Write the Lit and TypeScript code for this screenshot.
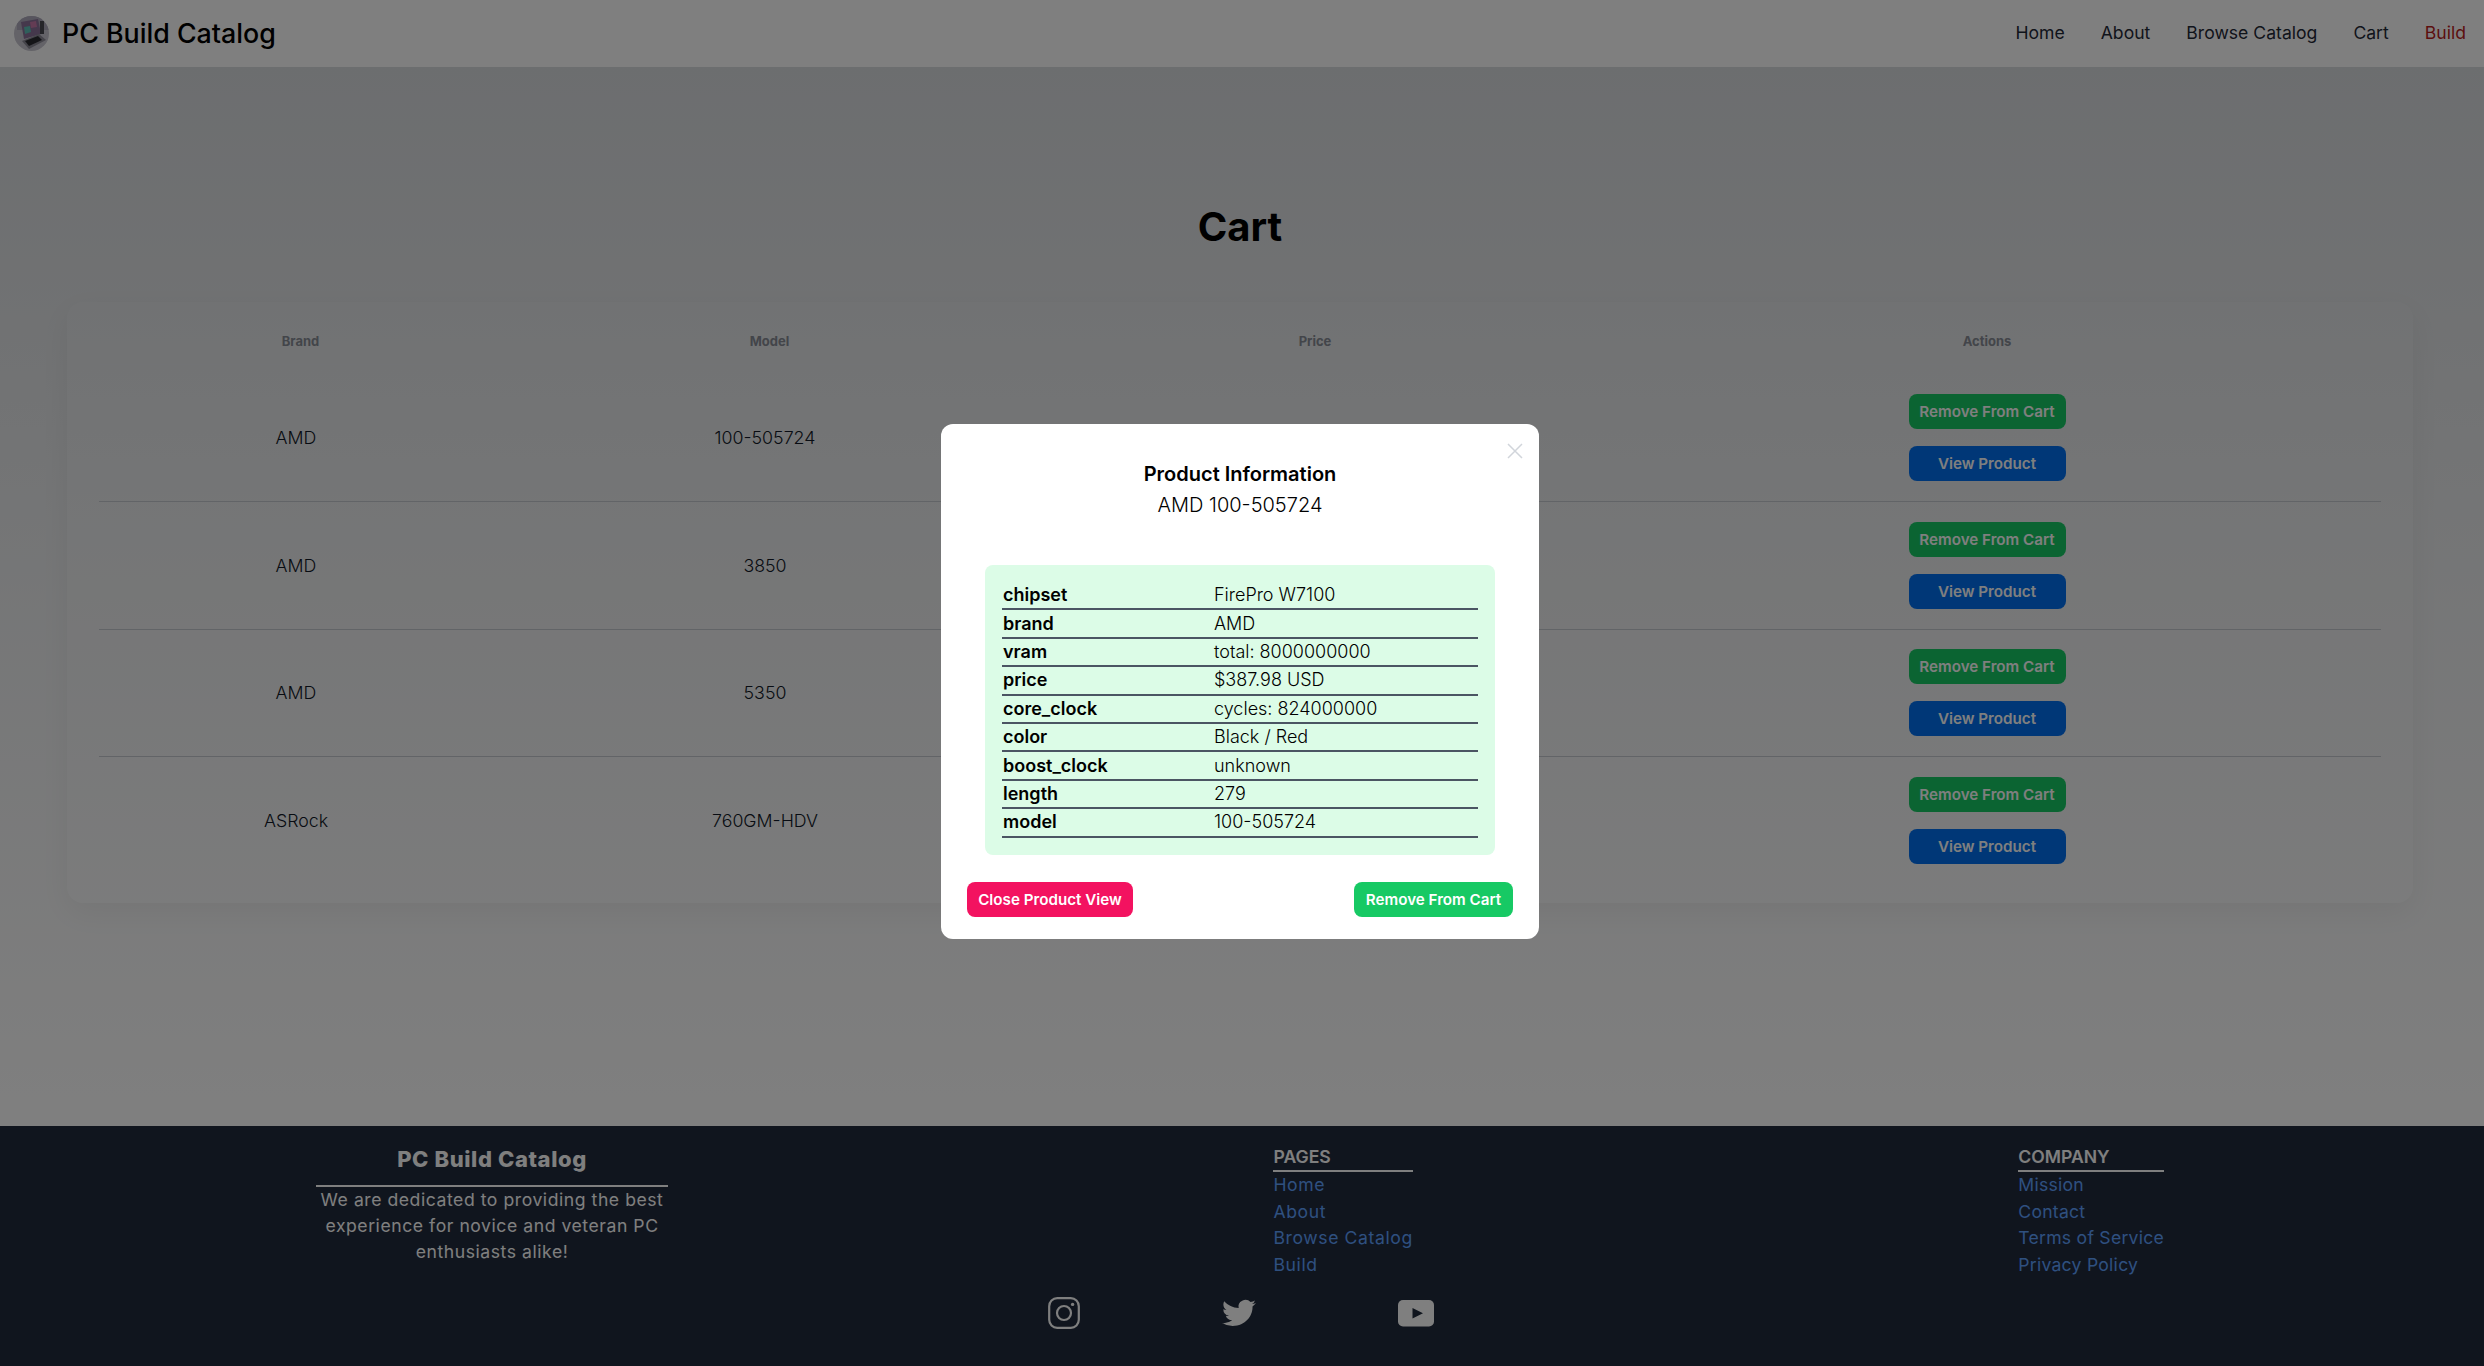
import { css, html, LitElement } from 'lit';
import { customElement } from 'lit/decorators.js';

const navLinks = ['Home', 'About', 'Browse Catalog', 'Cart', 'Build'];
const cartRows = [
  { brand: 'AMD', model: '100-505724', price: '$387.98 USD' },
  { brand: 'AMD', model: '3850', price: '' },
  { brand: 'AMD', model: '5350', price: '' },
  { brand: 'ASRock', model: '760GM-HDV', price: '' },
];
const specs = [
  ['chipset', 'FirePro W7100'],
  ['brand', 'AMD'],
  ['vram', 'total: 8000000000'],
  ['price', '$387.98 USD'],
  ['core_clock', 'cycles: 824000000'],
  ['color', 'Black / Red'],
  ['boost_clock', 'unknown'],
  ['length', '279'],
  ['model', '100-505724'],
];
const pages = ['Home', 'About', 'Browse Catalog', 'Build'];
const company = ['Mission', 'Contact', 'Terms of Service', 'Privacy Policy'];

@customElement('app-root')
export default class AppRoot extends LitElement {
  render() {
    return html`<div class="page">
      <nav class="nav">
        <div class="brand">
          <svg class="logo" viewBox="0 0 35 35">
            <defs><clipPath id="lc"><circle cx="17.5" cy="17.5" r="17.5"></circle></clipPath></defs>
            <g clip-path="url(#lc)">
              <rect width="35" height="35" fill="#c8c6d0"></rect>
              <rect x="3" y="0" width="32" height="14" fill="#aeaabc"></rect>
              <path d="M7 6 L24 3 L27 18 L10 23 Z" fill="#8a7098"></path>
              <path d="M10 11 L16 10 L17 16 L11 18 Z" fill="#5fc0b8"></path>
              <path d="M16 6 L22 5 L23 11 L17 12 Z" fill="#c878a8"></path>
              <rect x="26" y="5" width="4" height="13" fill="#4a4a52"></rect>
              <path d="M8 25 L25 18 L32 24 L15 33 Z" fill="#8a8894"></path>
              <path d="M11 25 L24 20 L28 24 L15 30 Z" fill="#2a2a30"></path>
            </g>
          </svg>
          <span class="brand-name">PC Build Catalog</span>
        </div>
        <div class="nav-links">
          ${navLinks.map((l) => html`<a class=${l === 'Build' ? 'build' : ''}>${l}</a>`)}
        </div>
      </nav>

      <main class="main">
        <h1>Cart</h1>
        <div class="card">
          <div class="row head">
            <div class="shift">Brand</div>
            <div class="shift">Model</div>
            <div>Price</div>
            <div>Actions</div>
          </div>
          ${cartRows.map(
            (r) => html`<div class="row item">
              <div>${r.brand}</div>
              <div>${r.model}</div>
              <div>${r.price}</div>
              <div class="actions">
                <button class="btn green">Remove From Cart</button>
                <button class="btn blue">View Product</button>
              </div>
            </div>`
          )}
        </div>
      </main>

      <footer class="footer">
        <div class="cols">
          <div class="about">
            <div class="about-title">PC Build Catalog</div>
            <p>We are dedicated to providing the best experience for novice and veteran PC enthusiasts alike!</p>
          </div>
          <div class="links pages">
            <div class="links-title">PAGES</div>
            ${pages.map((l) => html`<a>${l}</a>`)}
          </div>
          <div class="links company">
            <div class="links-title">COMPANY</div>
            ${company.map((l) => html`<a>${l}</a>`)}
          </div>
        </div>
        <div class="social">
          <svg width="32" height="32" viewBox="0 0 32 32" fill="none" stroke="#fff" stroke-width="2.2">
            <rect x="1.2" y="1.2" width="29.6" height="29.6" rx="8"></rect>
            <circle cx="16" cy="16" r="7"></circle>
            <circle cx="24.6" cy="7.4" r="1.7" fill="#fff" stroke="none"></circle>
          </svg>
          <svg width="34" height="32" viewBox="0 0 24 24" fill="#fff" preserveAspectRatio="none">
            <path d="M23.95 4.57a10 10 0 0 1-2.82.77 4.96 4.96 0 0 0 2.16-2.72c-.95.55-2 .95-3.12 1.18a4.92 4.92 0 0 0-8.38 4.48C7.69 8.09 4.07 6.13 1.64 3.16a4.82 4.82 0 0 0-.67 2.48c0 1.71.87 3.21 2.19 4.1a4.9 4.9 0 0 1-2.23-.62v.06a4.92 4.92 0 0 0 3.95 4.83 5 5 0 0 1-2.21.08 4.94 4.94 0 0 0 4.6 3.42A9.87 9.87 0 0 1 0 19.54a13.94 13.94 0 0 0 7.55 2.21c9.05 0 14-7.5 14-13.98 0-.21 0-.42-.02-.63a9.94 9.94 0 0 0 2.46-2.55z"></path>
          </svg>
          <svg width="36" height="27" viewBox="0 0 36 27">
            <rect width="36" height="26.5" rx="5" fill="#fff"></rect>
            <path d="M14.5 8 L25 13.3 L14.5 18.6 Z" fill="#202a3c"></path>
          </svg>
        </div>
      </footer>

      <div class="overlay"></div>
      <div class="modal">
        <svg class="close" viewBox="0 0 16 16" width="16" height="16" stroke="#d1d5db" stroke-width="1.5" fill="none">
          <path d="M1 1 L15 15 M15 1 L1 15"></path>
        </svg>
        <div class="m-title">Product Information</div>
        <div class="m-sub">AMD 100-505724</div>
        <div class="spec-box">
          <table>
            ${specs.map(([k, v]) => html`<tr><th>${k}</th><td>${v}</td></tr>`)}
          </table>
        </div>
        <div class="m-actions">
          <button class="m-btn rose">Close Product View</button>
          <button class="m-btn lime">Remove From Cart</button>
        </div>
      </div>
    </div>`;
  }

  static styles = css`
    :host {
      display: block;
      font-family: Inter, 'Liberation Sans', sans-serif;
    }
    .page {
      position: relative;
      width: 2484px;
      height: 1366px;
      display: flex;
      flex-direction: column;
    }
    .nav {
      height: 67px;
      flex: none;
      background: #fff;
      display: flex;
      align-items: center;
      justify-content: space-between;
      padding: 0 18px 0 14px;
    }
    .brand {
      display: flex;
      align-items: center;
      gap: 13px;
    }
    .logo {
      width: 35px;
      height: 35px;
    }
    .brand-name {
      font-size: 26.8px;
      font-weight: 500;
      color: #000;
      margin-top: -2px;
    }
    .nav-links {
      display: flex;
      gap: 36px;
      font-size: 17.6px;
      color: #1f2937;
      margin-top: -2px;
    }
    .nav-links .build {
      color: #b91c1c;
    }
    .main {
      flex: 1;
      padding: 0 71px 0 67px;
      background: linear-gradient(#d9dcdf, #ffffff);
    }
    h1 {
      margin: 135px 0 50px;
      text-align: center;
      font-size: 40px;
      line-height: 50px;
      font-weight: 700;
      color: #000;
    }
    .card {
      background: rgba(255, 255, 255, 0.06);
      border-radius: 16px;
      padding: 0 32px;
      height: 601px;
      box-sizing: border-box;
      box-shadow: 0 10px 30px rgba(0, 0, 0, 0.05);
    }
    .row {
      display: grid;
      grid-template-columns: 394px 544px 556px 788px;
      text-align: center;
      align-items: center;
    }
    .head {
      height: 63px;
      font-size: 13px;
      font-weight: 700;
      color: #868b94;
      border-bottom: 1px solid #e5e7eb;
      box-sizing: border-box;
      padding-top: 16px;
    }
    .shift {
      padding-left: 9px;
    }
    .item {
      height: 127.5px;
      border-bottom: 1px solid #c4c8ce;
      box-sizing: border-box;
      font-size: 17.8px;
      font-weight: 300;
      color: #111827;
    }
    .item:nth-child(2) {
      height: 137px;
      padding-top: 9px;
    }
    .item:last-child {
      border-bottom: none;
    }
    .actions {
      display: flex;
      flex-direction: column;
      align-items: center;
      gap: 17px;
    }
    .btn {
      width: 157px;
      height: 35px;
      border: none;
      border-radius: 8px;
      padding: 0;
      font: 600 15.2px Inter, sans-serif;
      color: #fff;
    }
    .green {
      background: #17c964;
    }
    .blue {
      background: #006fee;
    }
    .footer {
      height: 240px;
      flex: none;
      background: #202a3c;
      color: #fff;
      position: relative;
    }
    .cols {
      display: flex;
      justify-content: space-between;
      padding: 18px 320px 0 316px;
      box-sizing: border-box;
    }
    .about {
      width: 352px;
      text-align: center;
    }
    .about-title {
      font-size: 22px;
      font-weight: 800;
      line-height: 30px;
      padding-bottom: 11px;
      border-bottom: 2px solid #fff;
      letter-spacing: 0.6px;
    }
    .about p {
      margin: 0;
      font-size: 17.6px;
      line-height: 26px;
      letter-spacing: 0.55px;
    }
    .links {
      display: flex;
      flex-direction: column;
      font-size: 17.6px;
      line-height: 26.6px;
    }
    .links-title {
      font-weight: 600;
      line-height: 26px;
      border-bottom: 2px solid #fff;
    }
    .links a {
      color: #5fa0ff;
    }
    .pages a {
      letter-spacing: 0.6px;
    }
    .company a {
      letter-spacing: 0.25px;
    }
    .social {
      position: absolute;
      left: 0;
      top: 171px;
      width: 2482px;
      display: flex;
      justify-content: center;
      align-items: center;
      gap: 142px;
    }
    .overlay {
      position: fixed;
      inset: 0;
      background: rgba(0, 0, 0, 0.5);
    }
    .modal {
      position: absolute;
      left: 941px;
      top: 424px;
      width: 598px;
      height: 515px;
      box-sizing: border-box;
      background: #fff;
      border-radius: 12px;
      display: flex;
      flex-direction: column;
      align-items: center;
    }
    .close {
      position: absolute;
      right: 16px;
      top: 19px;
    }
    .m-title {
      margin-top: 36px;
      font-size: 20px;
      line-height: 28px;
      font-weight: 600;
      color: #000;
    }
    .m-sub {
      margin-top: 3px;
      font-size: 20px;
      line-height: 28px;
      font-weight: 300;
      color: #000;
    }
    .spec-box {
      margin-top: 46px;
      width: 510px;
      height: 290px;
      box-sizing: border-box;
      background: #dcfce7;
      border-radius: 8px;
      padding: 17px;
    }
    table {
      width: 100%;
      border-collapse: collapse;
      font-size: 18px;
      color: #000;
    }
    tr {
      border-bottom: 2px solid #4b5563;
    }
    th,
    td {
      padding: 0 1px;
      height: 26.4px;
      text-align: left;
      line-height: 26px;
    }
    th {
      width: 209px;
      font-weight: 600;
    }
    td {
      font-weight: 300;
    }
    .m-actions {
      margin-top: 27px;
      width: 546px;
      display: flex;
      justify-content: space-between;
    }
    .m-btn {
      height: 34.5px;
      border: none;
      border-radius: 8px;
      font: 600 15.2px Inter, sans-serif;
      color: #fff;
      padding: 0;
    }
    .rose {
      width: 166px;
      background: #f31260;
    }
    .lime {
      width: 159px;
      background: #17c964;
    }
  `;
}
